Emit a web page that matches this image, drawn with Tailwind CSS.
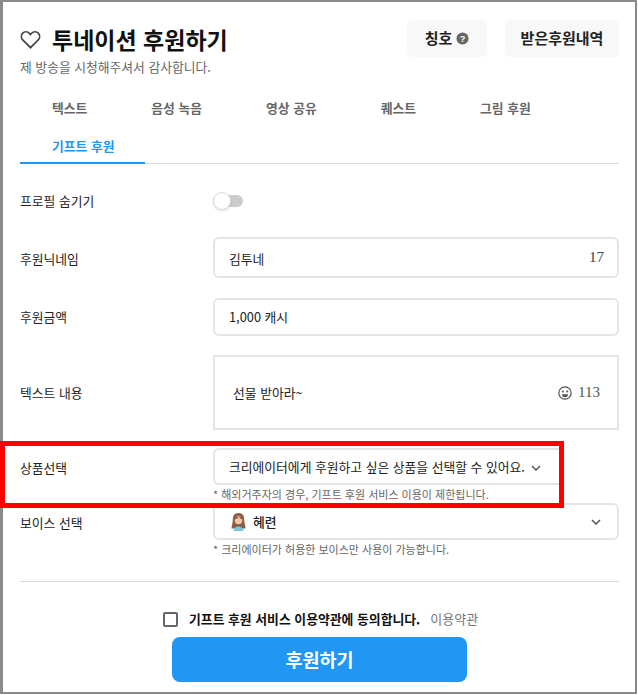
<!DOCTYPE html>
<html lang="ko">
  <head>
    <meta charset="UTF-8" />
    <title>투네이션 후원하기</title>
    <script src="https://cdn.jsdelivr.net/npm/@tailwindcss/browser@4"></script>
  </head>
  <body class="bg-white">
    <div class="relative w-[638px] h-[695px] overflow-hidden font-['Noto_Sans_CJK_KR','Noto_Sans',sans-serif] text-[#222]">
      <div class="mr-[1px] h-[694px] border-2 border-l-[3px] border-[#8a8a8a] pt-[18px] pl-[17px] pr-[16px]">
        <!-- header -->
        <div class="flex justify-between h-[38px]">
          <div class="flex items-center">
            <svg class="w-[21px] h-[19px] mr-[11px]" viewBox="0 0 24 22" fill="none" stroke="#444" stroke-width="2">
              <path d="M12 20.5 3.2 11.6C.9 9.2.9 5.6 3 3.5c2.200-2.100 5.600-1.900 7.700.3L12 5.200l1.300-1.400c2.100-2.200 5.500-2.400 7.700-.3 2.100 2.100 2.100 5.700-.2 8.100z" />
            </svg>
            <h1 class="text-[23px] font-bold text-[#111] leading-none">투네이션 후원하기</h1>
          </div>
          <div class="flex gap-[18px]">
            <button class="w-[80px] h-[37px] rounded-md bg-[#f8f8f8] text-[15px] font-bold flex items-center justify-center gap-[4px]">
              칭호
              <svg class="w-[13px] h-[13px]" viewBox="0 0 14 14">
                <circle cx="7" cy="7" r="6.500" fill="#666" />
                <text x="7" y="10.500" text-anchor="middle" font-size="10" font-weight="700" fill="#fff" font-family="Liberation Sans">?</text>
              </svg>
            </button>
            <button class="w-[114px] h-[37px] rounded-md bg-[#f8f8f8] text-[15px] font-bold">받은후원내역</button>
          </div>
        </div>
        <p class="text-[12.800px] text-[#666] leading-[18px]">제 방송을 시청해주셔서 감사합니다.</p>

        <!-- tabs -->
        <div class="flex flex-wrap mt-[14px] border-b border-[#dcdcdc] text-[12.800px] font-bold text-[#666] w-[599px]">
          <div class="px-8 h-[37px] leading-[35px]">텍스트</div>
          <div class="px-8 h-[37px] leading-[35px]">음성 녹음</div>
          <div class="px-8 h-[37px] leading-[35px]">영상 공유</div>
          <div class="px-8 h-[37px] leading-[35px]">퀘스트</div>
          <div class="px-8 h-[37px] leading-[35px]">그림 후원</div>
          <div class="pl-8 h-[37px] leading-[37px] w-[125px] text-[#2196f3] border-b-2 border-[#2196f3] -mb-px">기프트 후원</div>
        </div>

        <!-- form -->
        <div class="mt-[24px] w-[599px] text-[12.800px]">
          <div class="flex items-center h-[26px]">
            <div class="w-[193px]">프로필 숨기기</div>
            <div class="relative w-[30px] h-[12px] rounded-full bg-[#ccc]">
              <span class="absolute left-0 top-[-3px] w-[18px] h-[18px] rounded-full bg-white border border-[#ddd] shadow-sm"></span>
            </div>
          </div>

          <div class="flex items-center mt-[23px]">
            <div class="w-[193px] pt-[2px]">후원닉네임</div>
            <div class="w-[406px] h-[41px] border-2 border-[#e4e4e4] rounded-md flex items-center justify-between pl-[14px] pr-[13px]">
              <span class="pt-[2px]">김투네</span>
              <span class="font-['Liberation_Serif',serif] text-[15px] text-[#444]">17</span>
            </div>
          </div>

          <div class="flex items-center mt-[20px]">
            <div class="w-[193px]">후원금액</div>
            <div class="w-[406px] h-[38px] border-2 border-[#e4e4e4] rounded-md flex items-center pl-[14px]">1,000 캐시</div>
          </div>

          <div class="flex items-center mt-[19px]">
            <div class="w-[193px]">텍스트 내용</div>
            <div class="w-[406px] h-[75px] border-2 border-[#e4e4e4] flex items-center justify-between pl-[18px] pr-[17px]">
              <span>선물 받아라~</span>
              <span class="flex items-center gap-[6px] font-['Liberation_Serif',serif] text-[15px] text-[#555]">
                <svg class="w-[14px] h-[14px]" viewBox="0 0 14 14" fill="none" stroke="#555" stroke-width="1.200">
                  <circle cx="7" cy="7" r="6.200" />
                  <circle cx="4.800" cy="5.500" r="1" fill="#555" stroke="none" />
                  <circle cx="9.200" cy="5.500" r="1" fill="#555" stroke="none" />
                  <path d="M4 8.200h6a3 3 0 0 1-6 0z" fill="#555" stroke="none" />
                </svg>
                113
              </span>
            </div>
          </div>

          <div class="flex mt-[18px]">
            <div class="w-[193px] pt-[10px]">상품선택</div>
            <div class="w-[406px]">
              <div class="w-[346px] h-[37px] border-2 border-r-0 border-[#e4e4e4] rounded-l-md flex items-center pl-[14px] pt-[1px] whitespace-nowrap">크리에이터에게 후원하고 싶은 상품을 선택할 수 있어요.</div>
              <p class="text-[11px] leading-[18px] text-[#666]">* 해외거주자의 경우, 기프트 후원 서비스 이용이 제한됩니다.</p>
            </div>
          </div>

          <div class="flex">
            <div class="w-[193px] pt-[10px]">보이스 선택</div>
            <div class="w-[406px]">
              <div class="h-[37px] border-2 border-[#e4e4e4] rounded-md flex items-center justify-between pl-[16px] pr-[16px]">
                <span class="flex items-center gap-[7px] font-medium">
                  <svg class="w-[15px] h-[18px]" viewBox="0 0 15 18">
                    <path d="M7.500 0C3.500 0 1.800 2.800 1.800 6.500c0 4-1.300 6.500-1.300 9h14c0-2.500-1.300-5-1.300-9C13.200 2.800 11.500 0 7.500 0z" fill="#8d5a44" />
                    <ellipse cx="7.500" cy="7" rx="3.800" ry="4.300" fill="#f2c5a5" />
                    <path d="M3.500 6.500C5.500 6 7 5 7.800 3.500c.8 1.500 2 2.500 3.700 3V3.500h-8z" fill="#8d5a44" />
                    <path d="M2.500 18c0-3 2-4.500 5-4.500s5 1.500 5 4.500z" fill="#7ec4dc" />
                  </svg>
                  혜련
                </span>
                <svg class="w-[10px] h-[6px]" viewBox="0 0 10 6" fill="none" stroke="#555" stroke-width="1.500"><path d="m1 1 4 4 4-4" /></svg>
              </div>
              <p class="text-[11px] leading-[18px] text-[#666]">* 크리에이터가 허용한 보이스만 사용이 가능합니다.</p>
            </div>
          </div>
        </div>

        <div class="w-[599px] border-t border-[#d8d8d8] mt-[23px]"></div>

        <!-- agree -->
        <div class="flex items-center w-[599px] mt-[29px] h-[16px] pl-[143px]">
          <span class="w-[15px] h-[15px] border-2 border-[#666] rounded-[2px] mr-[11px]"></span>
          <span class="text-[12.850px] font-bold text-[#111]">기프트 후원 서비스 이용약관에 동의합니다.</span>
          <span class="text-[13px] text-[#777] ml-[10px]">이용약관</span>
        </div>
        <button class="block w-[295px] h-[45px] mt-[10px] ml-[152px] rounded-lg bg-[#2196f3] text-white text-[18.500px] font-bold">후원하기</button>
      </div>

      <!-- annotation box on top of the screenshot -->
      <div class="absolute left-0 top-[441px] w-[564px] h-[67px] border-[5px] border-[#ff0000]"></div>
      <svg class="absolute left-[531px] top-[465px] w-[10px] h-[6px]" viewBox="0 0 10 6" fill="none" stroke="#555" stroke-width="1.500"><path d="m1 1 4 4 4-4" /></svg>
    </div>
  </body>
</html>
